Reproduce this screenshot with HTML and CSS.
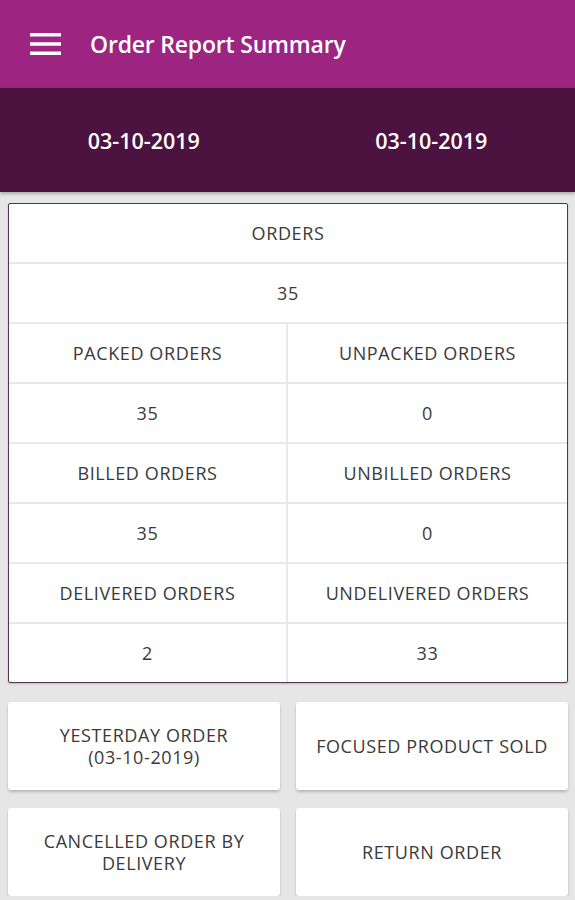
FILE: index.html
```html
<!DOCTYPE html>
<html lang="en">
<head>
    <meta charset="UTF-8">
    <meta name="viewport" content="width=device-width, initial-scale=1.0">
    <title>Order Report Summary</title>
    <link rel="stylesheet" href="styles.css">
</head>
<body>
    <div class="app-bar">
        <svg class="menu-icon" width="31" height="22" viewBox="0 0 31 22">
            <rect x="0" y="0" width="31" height="3.5" fill="#fff"/>
            <rect x="0" y="9.25" width="31" height="3.5" fill="#fff"/>
            <rect x="0" y="18.5" width="31" height="3.5" fill="#fff"/>
        </svg>
        <h1 class="app-title">Order Report Summary</h1>
    </div>

    <div class="date-bar">
        <div class="date-item">03-10-2019</div>
        <div class="date-item">03-10-2019</div>
    </div>

    <div class="content">
        <div class="report-table">
            <div class="cell full">ORDERS</div>
            <div class="cell full">35</div>

            <div class="cell left">PACKED ORDERS</div>
            <div class="cell">UNPACKED ORDERS</div>
            <div class="cell left">35</div>
            <div class="cell">0</div>

            <div class="cell left">BILLED ORDERS</div>
            <div class="cell">UNBILLED ORDERS</div>
            <div class="cell left">35</div>
            <div class="cell">0</div>

            <div class="cell left">DELIVERED ORDERS</div>
            <div class="cell">UNDELIVERED ORDERS</div>
            <div class="cell left last">2</div>
            <div class="cell last">33</div>
        </div>

        <div class="button-grid">
            <div class="report-button">YESTERDAY ORDER<br>(03-10-2019)</div>
            <div class="report-button">FOCUSED PRODUCT SOLD</div>
            <div class="report-button">CANCELLED ORDER BY<br>DELIVERY</div>
            <div class="report-button">RETURN ORDER</div>
        </div>
    </div>
</body>
</html>
```

FILE: styles.css
```css
body {
    margin: 0;
    background-color: #e6e6e6;
    font-family: "Open Sans", "Noto Sans", sans-serif;
}

/* top bar */
.app-bar {
    height: 88px;
    display: flex;
    align-items: center;
    background-color: #9d2481;
}

.menu-icon {
    margin-left: 30px;
    margin-top: -1px;
}

.app-title {
    margin: 0 0 0 29px;
    font-size: 23px;
    font-weight: 600;
    color: #fff;
    letter-spacing: -0.2px;
}

/* from / to dates */
.date-bar {
    height: 104px;
    display: flex;
    background-color: #4d1340;
    box-shadow: 0 2px 3px rgba(0, 0, 0, 0.25);
}

.date-item {
    flex: 1;
    display: flex;
    align-items: center;
    justify-content: center;
    font-size: 21.5px;
    font-weight: 600;
    color: #fff;
}

.content {
    padding: 11px 7px 0 8px;
}

/* summary table */
.report-table {
    display: grid;
    grid-template-columns: 1fr 1fr;
    background-color: #fff;
    border: 1.5px solid #55364c;
    border-radius: 2px;
    box-shadow: 0 1px 2px rgba(0, 0, 0, 0.2);
}

.cell {
    height: 58px;
    display: flex;
    align-items: center;
    justify-content: center;
    border-bottom: 2px solid #e8e8e8;
    font-size: 18px;
    letter-spacing: 0.6px;
    color: #3a3a3a;
}

.cell.full {
    grid-column: span 2;
}

.cell.left {
    border-right: 2px solid #e8e8e8;
}

.cell.last {
    border-bottom: none;
}

/* buttons below */
.button-grid {
    display: grid;
    grid-template-columns: 1fr 1fr;
    column-gap: 16px;
    row-gap: 18px;
    margin-top: 19px;
}

.report-button {
    height: 88px;
    display: flex;
    align-items: center;
    justify-content: center;
    text-align: center;
    background-color: #fff;
    border-radius: 3px;
    box-shadow: 0 2px 3px rgba(0, 0, 0, 0.2);
    font-size: 18px;
    letter-spacing: 0.6px;
    line-height: 22px;
    color: #3a3a3a;
}
```
